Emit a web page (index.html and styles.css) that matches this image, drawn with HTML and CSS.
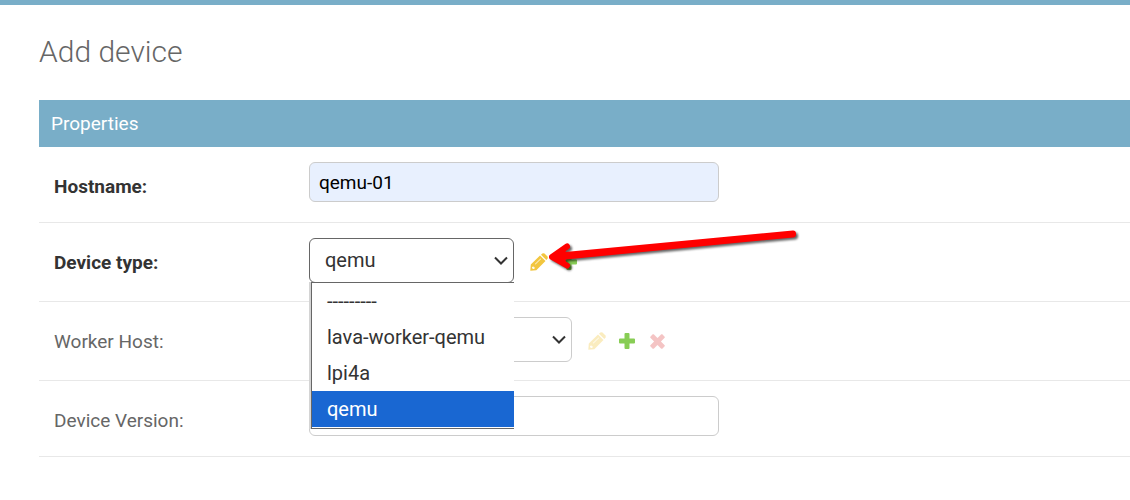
FILE: index.html
```html
<!DOCTYPE html>
<html lang="en">
<head>
<meta charset="utf-8">
<title>Add device</title>
<link rel="stylesheet" href="styles.css">
</head>
<body>
<svg class="sprite" aria-hidden="true">
  <symbol id="pencil" viewBox="0 0 18 18">
    <path fill-rule="evenodd" d="M0.300 17.700L0.800 11.500L10 2.500L15.500 8L6.300 17.200ZM2.200 14L2 15L3 16L4.500 15.800L4.700 14.300L3.500 14.200L3.500 13.200ZM5 11L5.400 11.500L11 5.900L10.600 5.400Z"/>
    <path d="M11 1.700L12.300 0.500Q13.300 0 14.500 0.500L17.500 3.500Q18 4.700 17.500 5.700L16.300 7Z"/>
  </symbol>
  <symbol id="plus" viewBox="0 0 16 16">
    <path d="M6.500 0h3q1 0 1 1v4.500h4.500q1 0 1 1v3q0 1-1 1h-4.500v4.500q0 1-1 1h-3q-1 0-1-1v-4.500h-4.500q-1 0-1-1v-3q0-1 1-1h4.500v-4.500q0-1 1-1z"/>
  </symbol>
  <symbol id="cross" viewBox="0 0 14 14">
    <path d="M3.500 0.300L7 3.800L10.500 0.300Q11 0 11.500 0.300L13.700 2.500Q14 3 13.700 3.500L10.200 7L13.700 10.500Q14 11 13.700 11.500L11.500 13.700Q11 14 10.500 13.700L7 10.200L3.500 13.700Q3 14 2.500 13.700L0.300 11.500Q0 11 0.300 10.500L3.800 7L0.300 3.500Q0 3 0.300 2.500L2.500 0.300Q3 0 3.500 0.300Z"/>
  </symbol>
</svg>
<div class="topbar"></div>
<main class="content">
  <h1 class="title">Add device</h1>
  <form class="module">
    <h2 class="module-title">Properties</h2>
    <div class="row">
      <label class="label required" for="hostname">Hostname:</label>
      <input class="text filled" id="hostname" type="text" value="qemu-01">
    </div>
    <div class="row select-row">
      <label class="label required" for="type">Device type:</label>
      <div class="picker">
        <select class="select open" id="type">
          <option>---------</option>
          <option>lava-worker-qemu</option>
          <option>lpi4a</option>
          <option selected>qemu</option>
        </select>
        <svg class="chevron" viewBox="0 0 14 9" aria-hidden="true"><path d="M1 1.500L7 7.500L13 1.500"/></svg>
        <ul class="menu" role="listbox" aria-label="Device type">
          <li class="option" role="option">---------</li>
          <li class="option" role="option">lava-worker-qemu</li>
          <li class="option" role="option">lpi4a</li>
          <li class="option current" role="option" aria-selected="true">qemu</li>
        </ul>
      </div>
      <div class="actions">
        <a class="action change" href="#" aria-label="Change device type"><svg class="icon"><use href="#pencil"/></svg></a>
        <a class="action add" href="#" aria-label="Add device type"><svg class="icon small"><use href="#plus"/></svg></a>
        <svg class="pointer" viewBox="0 0 260 52" aria-hidden="true">
          <g stroke-linecap="round" stroke-linejoin="round">
            <path d="M8 29L246 6.500L246 7.500L8 30.500Z" stroke-width="6"/>
            <path d="M20 19.500L5 30L20 38.500" fill="none" stroke-width="6"/>
            <path d="M6 30L18 22L17 29L18 36Z" stroke-width="2"/>
          </g>
        </svg>
      </div>
    </div>
    <div class="row select-row">
      <label class="label" for="worker">Worker Host:</label>
      <div class="picker wide">
        <select class="select" id="worker"><option></option></select>
        <svg class="chevron" viewBox="0 0 14 9" aria-hidden="true"><path d="M1 1.500L7 7.500L13 1.500"/></svg>
      </div>
      <div class="actions">
        <a class="action change faded" aria-label="Change worker host"><svg class="icon"><use href="#pencil"/></svg></a>
        <a class="action add" href="#" aria-label="Add worker host"><svg class="icon small"><use href="#plus"/></svg></a>
        <a class="action delete faded" aria-label="Delete worker host"><svg class="icon small"><use href="#cross"/></svg></a>
      </div>
    </div>
    <div class="row">
      <label class="label" for="version">Device Version:</label>
      <input class="text" id="version" type="text">
    </div>
  </form>
</main>
</body>
</html>
```
FILE: styles.css
```css
* { box-sizing: border-box; }
body {
  margin: 0;
  background: #fff;
  color: #333;
  font: 19px/24px Roboto, "Liberation Sans", sans-serif;
  overflow-x: hidden;
}
.sprite { position: absolute; width: 0; height: 0; }
.topbar { height: 5px; background: #79aec8; }
.content { padding: 29px 0 0 39px; }
.title {
  margin: 0 0 30px;
  font-size: 30px;
  line-height: 36px;
  font-weight: 300;
  color: #666;
}
.module { margin: 0; }
.module-title {
  margin: 0;
  padding: 12px;
  background: #79aec8;
  color: #fff;
  font-size: 19px;
  line-height: 23px;
  font-weight: 400;
}
.row {
  display: flex;
  align-items: flex-start;
  padding: 15px 15px 20px;
  border-bottom: 1px solid #e8e8e8;
}
.select-row { padding-bottom: 18px; }
.label { flex: 0 0 255px; padding-top: 13px; color: #666; }
.required { font-weight: 700; color: #333; }
.text {
  flex: 0 1 410px;
  min-width: 0;
  height: 40px;
  padding: 0 9px;
  border: 1px solid #ccc;
  border-radius: 6px;
  background: #fff;
  color: #000;
  font: inherit;
}
.filled { background: #e8f0fe; }
.picker { position: relative; flex: 0 0 205px; }
.wide { flex-basis: 263px; }
.chevron {
  position: absolute;
  right: 6px;
  top: 18px;
  width: 14px;
  height: 9px;
  fill: none;
  stroke: #333;
  stroke-width: 2;
  pointer-events: none;
}
.select {
  display: block;
  width: 100%;
  height: 45px;
  padding: 0 15px 1px;
  border: 1px solid #ccc;
  border-radius: 6px;
  background: #fff;
  color: #333;
  font: inherit;
  font-size: 20px;
  appearance: none;
}
.open { border-color: #666; }
.menu {
  position: absolute;
  z-index: 2;
  top: 44px;
  left: 2px;
  right: 0;
  margin: 0;
  padding: 0 0 1px;
  border: solid #666;
  border-width: 1px 0 1px 1px;
  background: #fff;
  box-shadow: -2px 0 0 #d4d4d4;
  list-style: none;
  font-size: 20px;
}
.option { height: 36px; padding: 0 15px; line-height: 36px; }
.current { background: #1967d2; color: #fff; }
.actions {
  position: relative;
  display: flex;
  align-items: center;
  gap: 12px;
  height: 45px;
  padding: 3px 0 0 16px;
}
.action { display: flex; justify-content: center; width: 18px; }
.icon { width: 18px; height: 18px; fill: currentColor; }
.small { width: 16px; height: 16px; }
.change { color: #f2c63f; }
.add { color: #88cd55; }
.delete { color: #e05050; }
.faded { opacity: .33; }
.delete .icon { width: 15px; height: 15px; }
.pointer {
  position: absolute;
  left: 33px;
  top: -11px;
  width: 260px;
  height: 52px;
  fill: red;
  stroke: red;
  filter: drop-shadow(2px 2px 1px #0009);
  pointer-events: none;
}
```
